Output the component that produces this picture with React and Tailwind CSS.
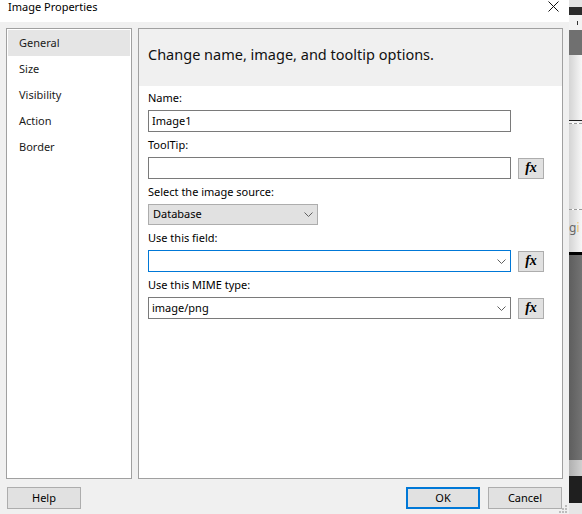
import React from "react";

const sections = ["General", "Size", "Visibility", "Action", "Border"];

function Chevron() {
  return (
    <svg width="9" height="5" viewBox="0 0 9 5" className="shrink-0">
      <path d="M0.5 0.5 L4.5 4.5 L8.5 0.5" fill="none" stroke="#606060" strokeWidth="1" />
    </svg>
  );
}

function FxButton() {
  return (
    <button
      type="button"
      className="w-[26px] h-[21px] shrink-0 flex items-center justify-center bg-[#e1e1e1] border border-[#adadad] text-black"
      style={{ fontFamily: '"Liberation Serif", serif' }}
    >
      <span className="italic font-bold text-[14px] leading-none">fx</span>
    </button>
  );
}

function Field({ label, children }) {
  return (
    <div className="flex flex-col">
      <div className="h-4 leading-4 mb-1">{label}</div>
      {children}
    </div>
  );
}

function TextBox({ value = "", focused = false, combo = false }) {
  return (
    <div
      className={`w-[363px] h-[22px] shrink-0 bg-white flex items-center pl-[3px] pr-[4px] border ${
        focused ? "border-[#0078d7]" : "border-[#7a7a7a]"
      }`}
    >
      <span className="flex-1">{value}</span>
      {combo && <Chevron />}
    </div>
  );
}

function SideStrip() {
  return (
    <div className="w-[13px] h-[514px] flex flex-col">
      <div className="h-[7px] bg-[#e4e4e4]" />
      <div className="h-[8px] bg-[#2b2b2b]" />
      <div className="h-[15px] bg-[#f3f3f3] flex items-center pl-[8px]">
        <div className="w-px h-[4px] bg-[#333]" />
      </div>
      <div className="h-[25px] bg-[#707070]" />
      <div className="h-[65px] bg-gradient-to-r from-[#d4d4d4] to-[#f7f7f7]" />
      <div className="h-px bg-[#1e1e1e]" />
      <div className="h-[2px] bg-[#f2f2f2]" />
      <div className="h-px border-t border-dashed border-[#9a9a9a]" />
      <div className="h-[85px] bg-gradient-to-r from-[#d4d4d4] to-[#f7f7f7]" />
      <div className="h-px border-t border-dashed border-[#9a9a9a]" />
      <div className="h-[42px] bg-gradient-to-r from-[#d4d4d4] to-[#f7f7f7] flex items-start pt-[12px] overflow-hidden text-[12px] leading-none text-[#666]">
        g<span className="text-[#e8c06a]">i</span>
      </div>
      <div className="h-[3px] bg-black" />
      <div className="h-[205px] bg-gradient-to-r from-[#5e5e5e] to-[#737373]" />
      <div className="h-[16px] bg-gradient-to-r from-[#b0b0b0] to-[#d0d0d0]" />
      <div className="h-[27px] bg-[#1f1f1f]" />
      <div className="flex-1 bg-[#e6e6e6]" />
    </div>
  );
}

export default function App() {
  return (
    <div
      className="w-[582px] h-[514px] flex text-[11px] text-black overflow-hidden"
      style={{ fontFamily: '"Noto Sans", "Open Sans", sans-serif' }}
    >
      <div className="w-[569px] h-[514px] flex flex-col bg-[#f0f0f0] relative">
        {/* title bar */}
        <div className="h-[22px] bg-white flex items-start justify-between pl-[8px] pr-[10px]">
          <span className="leading-[14px]">Image Properties</span>
          <svg width="11" height="11" viewBox="0 0 11 11" className="mt-px">
            <path d="M0.5 0.5 L10.5 10.5 M10.5 0.5 L0.5 10.5" stroke="#111" strokeWidth="1" />
          </svg>
        </div>

        {/* body */}
        <div className="flex gap-[6px] px-[6px] pt-[6px] h-[457px]">
          <div className="w-[126px] h-[451px] bg-white border border-[#a0a0a0] p-px flex flex-col">
            {sections.map((s, i) => (
              <div
                key={s}
                className={`h-[26px] flex items-center pl-[11px] pt-px ${
                  i === 0 ? "bg-[#e5e5e5]" : ""
                } text-[#1a1a1a]`}
              >
                {s}
              </div>
            ))}
          </div>

          <div className="w-[425px] h-[451px] bg-white border border-[#a0a0a0] flex flex-col">
            <div className="h-[57px] shrink-0 bg-[#f0f0f0] pl-[9px] pt-[15px] leading-[20px] text-[14.5px] text-[#111]">
              Change name, image, and tooltip options.
            </div>
            <div className="flex flex-col gap-[5px] pl-[9px] pt-[4px]">
              <Field label="Name:">
                <TextBox value="Image1" />
              </Field>
              <Field label="ToolTip:">
                <div className="flex items-center gap-[7px]">
                  <TextBox />
                  <FxButton />
                </div>
              </Field>
              <Field label="Select the image source:">
                <div className="w-[170px] h-[21px] bg-[#e1e1e1] border border-[#adadad] flex items-center pl-[4px] pr-[4px]">
                  <span className="flex-1">Database</span>
                  <Chevron />
                </div>
              </Field>
              <Field label="Use this field:">
                <div className="flex items-center gap-[7px]">
                  <TextBox focused combo />
                  <FxButton />
                </div>
              </Field>
              <Field label="Use this MIME type:">
                <div className="flex items-center gap-[7px]">
                  <TextBox value="image/png" combo />
                  <FxButton />
                </div>
              </Field>
            </div>
          </div>
        </div>

        {/* footer */}
        <div className="flex items-center justify-between px-[7px] pt-[8px]">
          <button type="button" className="w-[74px] h-[22px] bg-[#e1e1e1] border border-[#adadad]">
            Help
          </button>
          <div className="flex gap-[8px]">
            <button type="button" className="w-[74px] h-[22px] bg-[#e1e1e1] border-2 border-[#0078d7]">
              OK
            </button>
            <button type="button" className="w-[74px] h-[22px] bg-[#e1e1e1] border border-[#adadad]">
              Cancel
            </button>
          </div>
        </div>

        {/* resize grip */}
        <svg width="9" height="9" viewBox="0 0 9 9" className="absolute right-[2px] bottom-[1px]">
          <rect x="7" y="1" width="2" height="2" fill="#bdbdbd" />
          <rect x="4" y="4" width="2" height="2" fill="#bdbdbd" />
          <rect x="7" y="4" width="2" height="2" fill="#bdbdbd" />
          <rect x="1" y="7" width="2" height="2" fill="#bdbdbd" />
          <rect x="4" y="7" width="2" height="2" fill="#bdbdbd" />
          <rect x="7" y="7" width="2" height="2" fill="#bdbdbd" />
        </svg>
      </div>
      <SideStrip />
    </div>
  );
}
